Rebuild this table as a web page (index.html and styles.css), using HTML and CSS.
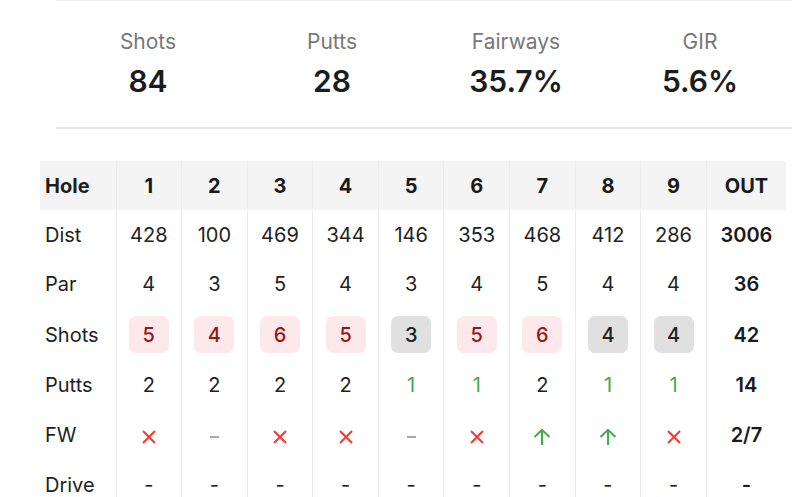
FILE: index.html
```html
<!DOCTYPE html>
<html>
<head>
<meta charset="utf-8">
<link rel="stylesheet" href="styles.css">
</head>
<body>
<section class="stats">
  <div class="stat"><div class="stat-label">Shots</div><div class="stat-value">84</div></div>
  <div class="stat"><div class="stat-label">Putts</div><div class="stat-value">28</div></div>
  <div class="stat"><div class="stat-label">Fairways</div><div class="stat-value">35.7%</div></div>
  <div class="stat"><div class="stat-label">GIR</div><div class="stat-value">5.6%</div></div>
</section>
<table class="card">
  <colgroup>
    <col class="c-name"><col class="c-h"><col class="c-h"><col class="c-h"><col class="c-h"><col class="c-h"><col class="c-h"><col class="c-h"><col class="c-h"><col class="c-h"><col class="c-out">
  </colgroup>
  <tr class="head"><th class="name">Hole</th><th>1</th><th>2</th><th>3</th><th>4</th><th>5</th><th>6</th><th>7</th><th>8</th><th>9</th><th>OUT</th></tr>
  <tr class="r49"><td class="name">Dist</td><td>428</td><td>100</td><td>469</td><td>344</td><td>146</td><td>353</td><td>468</td><td>412</td><td>286</td><td class="tot">3006</td></tr>
  <tr class="r50"><td class="name">Par</td><td>4</td><td>3</td><td>5</td><td>4</td><td>3</td><td>4</td><td>5</td><td>4</td><td>4</td><td class="tot">36</td></tr>
  <tr class="r51"><td class="name">Shots</td>
    <td><span class="badge over">5</span></td>
    <td><span class="badge over">4</span></td>
    <td><span class="badge over">6</span></td>
    <td><span class="badge over">5</span></td>
    <td><span class="badge par">3</span></td>
    <td><span class="badge over">5</span></td>
    <td><span class="badge over">6</span></td>
    <td><span class="badge par">4</span></td>
    <td><span class="badge par">4</span></td>
    <td class="tot">42</td></tr>
  <tr class="r50"><td class="name">Putts</td><td>2</td><td>2</td><td>2</td><td>2</td><td class="good">1</td><td class="good">1</td><td>2</td><td class="good">1</td><td class="good">1</td><td class="tot">14</td></tr>
  <tr class="r50"><td class="name">FW</td>
    <td><svg class="ic" viewBox="0 0 14 14"><path d="M1 1L13 13M13 1L1 13" stroke="#f23a2f" stroke-width="2" fill="none"/></svg></td>
    <td><span class="na"></span></td>
    <td><svg class="ic" viewBox="0 0 14 14"><path d="M1 1L13 13M13 1L1 13" stroke="#f23a2f" stroke-width="2" fill="none"/></svg></td>
    <td><svg class="ic" viewBox="0 0 14 14"><path d="M1 1L13 13M13 1L1 13" stroke="#f23a2f" stroke-width="2" fill="none"/></svg></td>
    <td><span class="na"></span></td>
    <td><svg class="ic" viewBox="0 0 14 14"><path d="M1 1L13 13M13 1L1 13" stroke="#f23a2f" stroke-width="2" fill="none"/></svg></td>
    <td><svg class="ic up" viewBox="0 0 18 18"><path d="M9 17V2M1.5 9L9 1.8L16.5 9" stroke="#3fae4a" stroke-width="2" fill="none"/></svg></td>
    <td><svg class="ic up" viewBox="0 0 18 18"><path d="M9 17V2M1.5 9L9 1.8L16.5 9" stroke="#3fae4a" stroke-width="2" fill="none"/></svg></td>
    <td><svg class="ic" viewBox="0 0 14 14"><path d="M1 1L13 13M13 1L1 13" stroke="#f23a2f" stroke-width="2" fill="none"/></svg></td>
    <td class="tot">2/7</td></tr>
  <tr class="r50"><td class="name">Drive</td><td>-</td><td>-</td><td>-</td><td>-</td><td>-</td><td>-</td><td>-</td><td>-</td><td>-</td><td class="tot">-</td></tr>
</table>
</body>
</html>
```
FILE: styles.css
```css
html, body {
  margin: 0;
  padding: 0;
  background: #ffffff;
  font-family: "Inter", "Liberation Sans", sans-serif;
  color: #1e1e1e;
  overflow: hidden;
}
.stats {
  margin-left: 56px;
  width: 736px;
  height: 126px;
  border-top: 2px solid #efefef;
  border-bottom: 2px solid #e6e6e6;
  box-sizing: content-box;
  display: grid;
  grid-template-columns: repeat(4, 1fr);
  margin-top: -1px;
}
.stat {
  display: flex;
  flex-direction: column;
  align-items: center;
  padding-top: 28px;
}
.stat-label {
  font-size: 21px;
  color: #777777;
  line-height: 26px;
}
.stat-value {
  font-size: 30px;
  font-weight: 600;
  color: #1c1c1c;
  line-height: 36px;
  margin-top: 8px;
}
.card {
  margin-top: 32px;
  margin-left: 40px;
  width: 746px;
  border-collapse: collapse;
  table-layout: fixed;
  font-size: 20px;
}
.c-name { width: 76px; }
.c-h { width: 65.6px; }
.c-out { width: 79.6px; }
.card th, .card td {
  padding: 0;
  text-align: center;
  vertical-align: middle;
  border-left: 1px solid #ececec;
  color: #222;
}
.card th:first-child, .card td:first-child { border-left: none; }
.head { height: 49px; background: #f4f4f4; }
.head th { font-weight: 700; font-size: 20px; color: #1a1a1a; }
.r49 { height: 49px; }
.r50 { height: 50px; }
.r51 { height: 51px; }
.card .name {
  text-align: left;
  padding-left: 5px;
  font-size: 20px;
  color: #1e1e1e;
}
.card .tot { font-weight: 600; color: #1a1a1a; }
.card .good { color: #45a84e; }
.badge {
  display: inline-flex;
  align-items: center;
  justify-content: center;
  width: 40px;
  height: 37px;
  border-radius: 7px;
  font-size: 20px;
  font-weight: 500;
}
.badge.over { background: #fde9eb; color: #9b1414; }
.badge.par { background: #e0e0e0; color: #222; }
.ic { width: 14px; height: 14px; display: inline-block; vertical-align: middle; }
.ic.up { width: 18px; height: 18px; }
.na {
  display: inline-block;
  width: 9px;
  height: 2px;
  background: #a8a8a8;
  vertical-align: middle;
}
```
